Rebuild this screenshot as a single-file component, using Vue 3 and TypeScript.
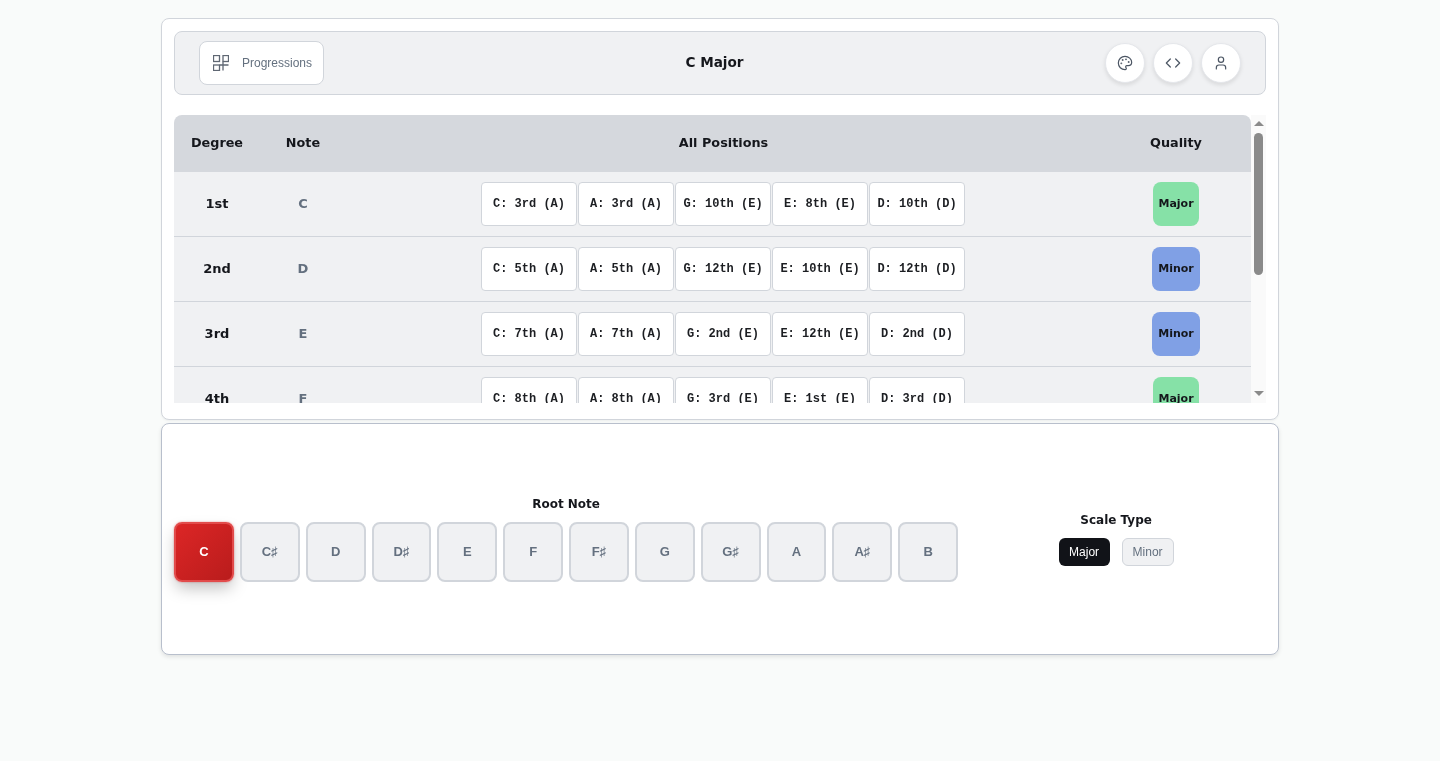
<template>
  <div class="page">
    <div class="app-shell">
      <section class="scale-card">
        <header class="toolbar">
          <button class="prog-btn" type="button">
            <svg class="prog-icon" viewBox="0 0 16 16">
              <rect x=".5" y=".5" width="6" height="6" />
              <rect x="10" y=".5" width="5.5" height="6" />
              <rect x=".5" y="10" width="6" height="5.5" />
              <path d="M10 6.5V15.5M6.5 10h9" />
            </svg>
            <span>Progressions</span>
          </button>
          <h1 class="scale-title">{{ root }} {{ scaleType }}</h1>
          <div class="round-group">
            <button class="round-btn" type="button" aria-label="Theme">
              <svg class="icon" viewBox="0 0 24 24">
                <path d="M12 22a1 1 0 0 1 0-20 10 9 0 0 1 10 9 5 5 0 0 1-5 5h-2.25a1.75 1.75 0 0 0-1.4 2.8l.3.4a1.75 1.75 0 0 1-1.4 2.8z" />
                <circle class="dot" cx="13.5" cy="6.5" r=".5" />
                <circle class="dot" cx="17.5" cy="10.5" r=".5" />
                <circle class="dot" cx="6.5" cy="12.5" r=".5" />
                <circle class="dot" cx="8.5" cy="7.5" r=".5" />
              </svg>
            </button>
            <button class="round-btn" type="button" aria-label="Source">
              <svg class="icon" viewBox="0 0 24 24">
                <path d="m16 18 6-6-6-6" />
                <path d="m8 6-6 6 6 6" />
              </svg>
            </button>
            <button class="round-btn" type="button" aria-label="Account">
              <svg class="icon" viewBox="0 0 24 24">
                <path d="M19 21v-2a4 4 0 0 0-4-4H9a4 4 0 0 0-4 4v2" />
                <circle cx="12" cy="7" r="4" />
              </svg>
            </button>
          </div>
        </header>

        <div class="table-area">
          <div class="table-wrapper">
            <table class="degree-table">
              <thead>
                <tr>
                  <th class="col-degree">Degree</th>
                  <th class="col-note">Note</th>
                  <th>All Positions</th>
                  <th class="col-quality">Quality</th>
                </tr>
              </thead>
              <tbody>
                <tr v-for="row in rows" :key="row.degree">
                  <td class="degree">{{ row.degree }}</td>
                  <td class="note">{{ row.note }}</td>
                  <td class="positions-cell">
                    <div class="positions">
                      <span v-for="pos in row.positions" :key="pos" class="position">{{ pos }}</span>
                    </div>
                  </td>
                  <td>
                    <span class="quality" :class="row.quality.toLowerCase()">{{ row.quality }}</span>
                  </td>
                </tr>
              </tbody>
            </table>
          </div>
          <div class="scroll-rail">
            <span class="arrow up"></span>
            <div class="scroll-track"><div class="scroll-thumb"></div></div>
            <span class="arrow down"></span>
          </div>
        </div>
      </section>

      <section class="picker-card">
        <div class="root-section">
          <h2 class="picker-label">Root Note</h2>
          <div class="root-keys">
            <button
              v-for="key in keys"
              :key="key"
              class="root-key"
              :class="{ active: key === root }"
              type="button"
            >
              {{ key }}
            </button>
          </div>
        </div>
        <div class="type-section">
          <h2 class="picker-label">Scale Type</h2>
          <div class="type-buttons">
            <button
              v-for="type in types"
              :key="type"
              class="type-btn"
              :class="{ active: type === scaleType }"
              type="button"
            >
              {{ type }}
            </button>
          </div>
        </div>
      </section>
    </div>
  </div>
</template>

<script setup lang="ts">
interface DegreeRow {
  degree: string
  note: string
  positions: string[]
  quality: string
}

const root = 'C'
const scaleType = 'Major'
const keys = ['C', 'C♯', 'D', 'D♯', 'E', 'F', 'F♯', 'G', 'G♯', 'A', 'A♯', 'B']
const types = ['Major', 'Minor']

const rows: DegreeRow[] = [
  {
    degree: '1st',
    note: 'C',
    positions: ['C: 3rd (A)', 'A: 3rd (A)', 'G: 10th (E)', 'E: 8th (E)', 'D: 10th (D)'],
    quality: 'Major'
  },
  {
    degree: '2nd',
    note: 'D',
    positions: ['C: 5th (A)', 'A: 5th (A)', 'G: 12th (E)', 'E: 10th (E)', 'D: 12th (D)'],
    quality: 'Minor'
  },
  {
    degree: '3rd',
    note: 'E',
    positions: ['C: 7th (A)', 'A: 7th (A)', 'G: 2nd (E)', 'E: 12th (E)', 'D: 2nd (D)'],
    quality: 'Minor'
  },
  {
    degree: '4th',
    note: 'F',
    positions: ['C: 8th (A)', 'A: 8th (A)', 'G: 3rd (E)', 'E: 1st (E)', 'D: 3rd (D)'],
    quality: 'Major'
  },
  {
    degree: '5th',
    note: 'G',
    positions: ['C: 10th (A)', 'A: 10th (A)', 'G: 5th (E)', 'E: 3rd (E)', 'D: 5th (D)'],
    quality: 'Major'
  },
  {
    degree: '6th',
    note: 'A',
    positions: ['C: 12th (A)', 'A: 12th (A)', 'G: 7th (E)', 'E: 5th (E)', 'D: 7th (D)'],
    quality: 'Minor'
  },
  {
    degree: '7th',
    note: 'B',
    positions: ['C: 2nd (A)', 'A: 2nd (A)', 'G: 9th (E)', 'E: 7th (E)', 'D: 9th (D)'],
    quality: 'Dim'
  }
]
</script>

<style>
html,
body {
  margin: 0;
  background: #f9fafb;
}
</style>

<style scoped>
.page {
  min-height: 761px;
  padding-top: 18px;
  box-sizing: border-box;
  background: #f9fbfa;
  font-family: "DejaVu Sans", sans-serif;
  color: #15171c;
}

.app-shell {
  width: 1118px;
  margin: 0 auto;
  display: flex;
  flex-direction: column;
  gap: 3px;
  will-change: transform;
}

.scale-card,
.picker-card {
  box-sizing: border-box;
  background: #fff;
  border-radius: 8px;
  border: 1px solid #d1d5db;
  padding: 12px;
}

.scale-card {
  height: 402px;
  display: flex;
  flex-direction: column;
  gap: 20px;
  box-shadow: 0 1px 2px rgba(0, 0, 0, 0.05);
}

.toolbar {
  flex: none;
  height: 64px;
  box-sizing: border-box;
  display: flex;
  align-items: center;
  justify-content: space-between;
  padding: 0 24px;
  background: #f0f1f3;
  border: 1px solid #d1d5db;
  border-radius: 8px;
}

.icon {
  width: 16px;
  height: 16px;
  fill: none;
  stroke: #4b5563;
  stroke-width: 1.8;
  stroke-linecap: round;
  stroke-linejoin: round;
}

.prog-icon {
  width: 16px;
  height: 16px;
  fill: none;
  stroke: #5f6773;
  stroke-width: 1.3;
}

.dot {
  fill: #4b5563;
}

.prog-btn {
  box-sizing: border-box;
  width: 125px;
  height: 44px;
  display: flex;
  align-items: center;
  gap: 13px;
  padding: 0 0 0 13px;
  background: #fff;
  border: 1px solid #d1d5db;
  border-radius: 8px;
  font-family: "Liberation Sans", Arial, sans-serif;
  font-size: 12px;
  color: #64707f;
  white-space: nowrap;
}

.scale-title {
  margin: 0;
  padding-bottom: 2px;
  font-size: 13.6px;
  font-weight: 700;
  color: #15171c;
}

.round-group {
  display: flex;
  gap: 8px;
}

.round-btn {
  width: 40px;
  height: 40px;
  padding: 0;
  display: flex;
  align-items: center;
  justify-content: center;
  background: #fff;
  border: 1px solid #e5e7eb;
  border-radius: 50%;
  box-shadow: 0 2px 4px rgba(0, 0, 0, 0.1);
}

.table-area {
  flex: none;
  height: 288px;
  display: flex;
}

.table-wrapper {
  flex: 1;
  min-width: 0;
  overflow-y: auto;
  scrollbar-width: none;
}

.scroll-rail {
  flex: none;
  width: 15px;
  display: flex;
  flex-direction: column;
  background: #fafafa;
}

.arrow {
  flex: none;
  box-sizing: border-box;
  height: 18px;
  display: flex;
  align-items: center;
  justify-content: center;
  padding-bottom: 1px;
}

.arrow.down {
  padding-bottom: 2px;
}

.arrow::before {
  content: "";
  border-left: 5px solid transparent;
  border-right: 5px solid transparent;
}

.arrow.up::before {
  border-bottom: 5px solid #8a8a8a;
}

.arrow.down::before {
  border-top: 5px solid #8a8a8a;
}

.scroll-track {
  flex: 1;
}

.scroll-thumb {
  width: 9px;
  height: 142px;
  margin: 0 auto;
  background: #8a8a8a;
  border-radius: 4.5px;
}

.degree-table {
  width: 100%;
  border-collapse: separate;
  border-spacing: 0;
  table-layout: fixed;
  font-size: 13px;
}

.degree-table th {
  position: sticky;
  top: 0;
  z-index: 1;
  height: 57px;
  padding: 0 0 2px;
  box-sizing: border-box;
  background: #d5d8dd;
  font-size: 12.8px;
  font-weight: 700;
  color: #15171c;
}

.degree-table th:first-child {
  border-top-left-radius: 8px;
}

.degree-table th:last-child {
  border-top-right-radius: 8px;
}

.col-degree,
.col-note {
  width: 86px;
}

.col-quality {
  width: 150px;
}

.degree-table td {
  padding: 10px 0;
  background: #f0f1f3;
  border-bottom: 1px solid #d1d5db;
  text-align: center;
  line-height: 14px;
}

.degree {
  font-weight: 700;
  color: #15171c;
}

.note {
  font-weight: 700;
  color: #64707f;
}

.degree-table td.positions-cell {
  padding-right: 1px;
}

.positions {
  display: flex;
  justify-content: center;
  gap: 1px;
}

.position {
  box-sizing: border-box;
  width: 96px;
  height: 44px;
  display: flex;
  align-items: center;
  justify-content: center;
  background: #fff;
  border: 1px solid #d1d5db;
  border-radius: 4px;
  font-family: "Liberation Mono", monospace;
  font-size: 12px;
  font-weight: 700;
  color: #1c1e22;
}

.quality {
  box-sizing: border-box;
  height: 44px;
  display: inline-flex;
  align-items: center;
  padding: 0 6px 1px;
  border-radius: 8px;
  font-size: 11px;
  font-weight: 700;
  color: #15171c;
  vertical-align: top;
}

.quality.major {
  padding: 0 5.5px 1px;
  background: #86e1a7;
}

.quality.minor {
  background: #80a0e5;
}

.quality.dim {
  background: #f0a0a0;
}

.picker-card {
  height: 232px;
  display: flex;
  align-items: center;
  gap: 8px;
  border-color: #b8bfcc;
  box-shadow: 0 2px 4px rgba(0, 0, 0, 0.1);
}

.picker-label {
  margin: 0;
  font-size: 12px;
  font-weight: 700;
  line-height: 18px;
  text-align: center;
  color: #15171c;
}

.root-section {
  flex: 1;
  display: flex;
  flex-direction: column;
  gap: 9px;
  padding-bottom: 2px;
}

.root-keys {
  display: flex;
  gap: 6px;
}

.root-key {
  flex: 1;
  min-width: 0;
  height: 60px;
  padding: 0;
  background: #f0f1f3;
  border: 2px solid #d1d5db;
  border-radius: 8px;
  font-family: "Liberation Sans", Arial, sans-serif;
  font-size: 13px;
  font-weight: 700;
  color: #64707f;
}

.root-key.active {
  color: #fff;
  background: linear-gradient(135deg, #dc2626, #b91c1c);
  border-color: #e24b4b;
  box-shadow: 0 8px 16px -2px rgba(0, 0, 0, 0.25), 0 0 2px rgba(220, 38, 38, 0.5);
}

.type-section {
  flex: none;
  width: 299.8px;
  display: flex;
  flex-direction: column;
  gap: 9px;
  padding-bottom: 2px;
}

.type-buttons {
  display: flex;
  justify-content: center;
  gap: 12px;
}

.type-btn {
  height: 28px;
  padding: 0 10px;
  background: #f0f1f3;
  border: 1px solid #d1d5db;
  border-radius: 6px;
  font-family: "Liberation Sans", Arial, sans-serif;
  font-size: 12px;
  color: #64707f;
}

.type-btn.active {
  padding: 0 10.5px;
  background: #111318;
  border: none;
  color: #fff;
}
</style>
